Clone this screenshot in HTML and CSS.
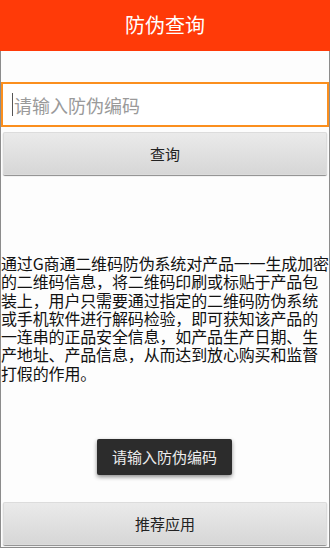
FILE: index.html
```html
<!DOCTYPE html>
<html>
<head>
<meta charset="utf-8">
<link rel="stylesheet" href="styles.css">
</head>
<body>
<div class="screen">
  <header class="titlebar">防伪查询</header>
  <main class="content">
    <div class="input-box">
      <span class="cursor"></span>
      <span class="placeholder">请输入防伪编码</span>
    </div>
    <div class="btn btn-query">查询</div>
    <p class="desc">通过G商通二维码防伪系统对产品一一生成加密的二维码信息，将二维码印刷或标贴于产品包装上，用户只需要通过指定的二维码防伪系统或手机软件进行解码检验，即可获知该产品的一连串的正品安全信息，如产品生产日期、生产地址、产品信息，从而达到放心购买和监督打假的作用。</p>
    <div class="spacer"></div>
    <div class="btn btn-recommend">推荐应用</div>
  </main>
  <div class="toast">请输入防伪编码</div>
</div>
</body>
</html>
```
FILE: styles.css
```css
html, body {
  margin: 0;
  padding: 0;
  background: #ffffff;
}
.screen {
  position: relative;
  width: 330px;
  height: 550px;
  overflow: hidden;
  display: flex;
  flex-direction: column;
  font-family: "Noto Sans CJK SC", "Noto Sans", sans-serif;
}
.titlebar {
  height: 51px;
  flex: 0 0 51px;
  background: #ff3a08;
  color: #fff;
  font-size: 20px;
  line-height: 50px;
  text-align: center;
}
.content {
  flex: 1;
  display: flex;
  flex-direction: column;
  border-left: 1px solid #8c8c8c;
  border-right: 1px solid #8c8c8c;
  border-bottom: 1px solid #8c8c8c;
  margin-bottom: 2px;
  padding-top: 31px;
  padding-bottom: 2px;
  background: #fdfdfd;
}
.input-box {
  height: 41px;
  border: 2px solid #fb8f1e;
  background: #fff;
  display: flex;
  align-items: center;
  padding-left: 9px;
}
.cursor {
  width: 1px;
  height: 23px;
  background: #555;
  margin-right: 1px;
}
.placeholder {
  color: #9a9a9a;
  font-size: 18px;
}
.btn {
  height: 43px;
  margin: 0 2px;
  border-radius: 2px;
  background: linear-gradient(#ebebeb, #d6d6d6);
  box-shadow: 0 1px 1px #8a8a8a, inset 0 0 0 1px #dcdcdc;
  color: #222;
  font-size: 15px;
  line-height: 43px;
  text-align: center;
}
.btn-query {
  margin-top: 5px;
}
.desc {
  margin: 79px 0 0 0;
  font-size: 16px;
  line-height: 18.3px;
  color: #111;
  letter-spacing: -0.15px;
}
.spacer {
  flex: 1;
}
.toast {
  position: absolute;
  left: 97px;
  top: 439px;
  width: 135px;
  height: 36px;
  background: #2c2c2c;
  border-radius: 2px;
  box-shadow: 0 2px 4px rgba(0,0,0,0.45);
  color: #ececec;
  font-size: 15px;
  line-height: 36px;
  text-align: center;
}
```
